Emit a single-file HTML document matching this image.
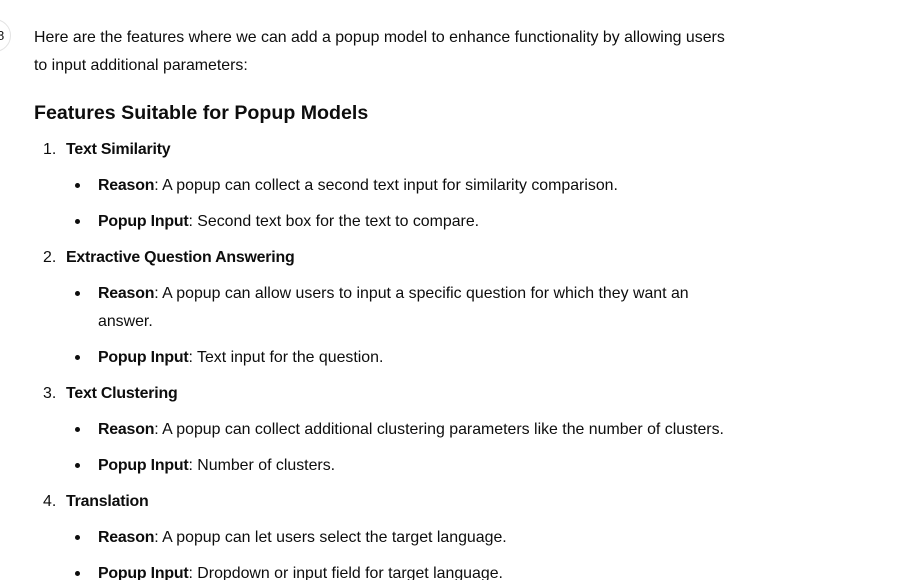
<!DOCTYPE html>
<html><head><meta charset="utf-8"><style>
html,body{margin:0;padding:0;background:#fff;width:897px;height:580px;overflow:hidden;position:relative}
body{font-family:"Liberation Sans",sans-serif;font-size:15.9px;color:#0d0d0d}
.l{position:absolute;height:28px;line-height:28px;white-space:nowrap}
b{font-weight:bold;letter-spacing:-0.2px}
.h{font-size:19.6px;font-weight:bold}
.d{position:absolute;width:5px;height:5px;border-radius:50%;background:#0d0d0d}
.av{position:absolute;left:-22px;top:19px;width:31px;height:31px;border:1px solid #e3e3e3;border-radius:50%}
</style></head><body>
<div class="av"></div>
<div class="l" style="left:-3px;top:22px;font-size:13px">8</div>
<div class="l" style="left:34px;top:24px">Here are the features where we can add a popup model to enhance functionality by allowing users</div>
<div class="l" style="left:34px;top:52px">to input additional parameters:</div>
<div class="l h" style="left:34px;top:99px">Features Suitable for Popup Models</div>

<div class="l" style="left:43px;top:136px">1.</div><div class="l" style="left:66px;top:136px"><b>Text Similarity</b></div>
<div class="d" style="left:75px;top:183px"></div><div class="l" style="left:98px;top:172px"><b>Reason</b>: A popup can collect a second text input for similarity comparison.</div>
<div class="d" style="left:75px;top:219px"></div><div class="l" style="left:98px;top:208px"><b>Popup Input</b>: Second text box for the text to compare.</div>

<div class="l" style="left:43px;top:244px">2.</div><div class="l" style="left:66px;top:244px"><b>Extractive Question Answering</b></div>
<div class="d" style="left:75px;top:291px"></div><div class="l" style="left:98px;top:280px"><b>Reason</b>: A popup can allow users to input a specific question for which they want an</div>
<div class="l" style="left:98px;top:308px">answer.</div>
<div class="d" style="left:75px;top:355px"></div><div class="l" style="left:98px;top:344px"><b>Popup Input</b>: Text input for the question.</div>

<div class="l" style="left:43px;top:380px">3.</div><div class="l" style="left:66px;top:380px"><b>Text Clustering</b></div>
<div class="d" style="left:75px;top:427px"></div><div class="l" style="left:98px;top:416px"><b>Reason</b>: A popup can collect additional clustering parameters like the number of clusters.</div>
<div class="d" style="left:75px;top:463px"></div><div class="l" style="left:98px;top:452px"><b>Popup Input</b>: Number of clusters.</div>

<div class="l" style="left:43px;top:488px">4.</div><div class="l" style="left:66px;top:488px"><b>Translation</b></div>
<div class="d" style="left:75px;top:535px"></div><div class="l" style="left:98px;top:524px"><b>Reason</b>: A popup can let users select the target language.</div>
<div class="d" style="left:75px;top:571px"></div><div class="l" style="left:98px;top:560px"><b>Popup Input</b>: Dropdown or input field for target language.</div>
</body></html>
